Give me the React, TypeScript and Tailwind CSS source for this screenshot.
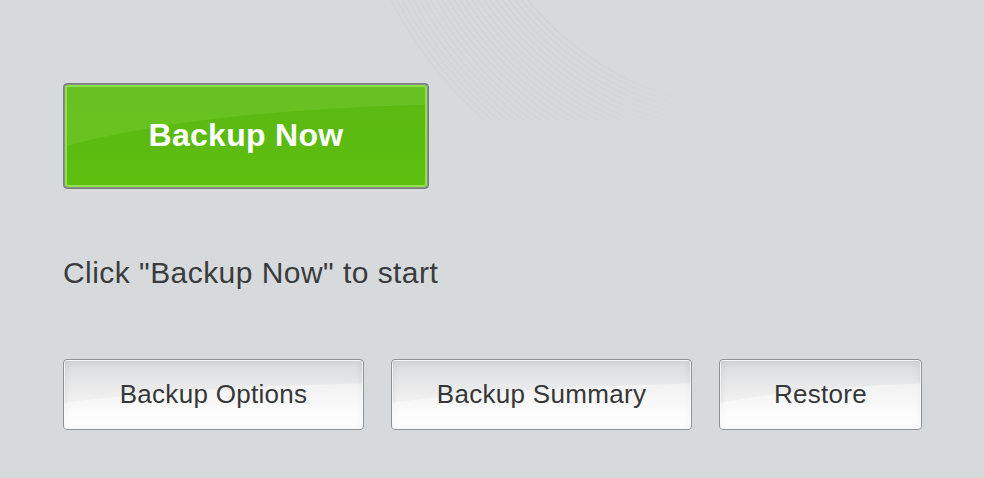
import React from "react";

const font = { fontFamily: '"Liberation Sans", Arial, sans-serif' };

function GrayButton({ label, w }: { label: string; w: string }) {
  return (
    <div
      className={`relative ${w} h-[71px] rounded-[4px] border border-[#8e9196] overflow-hidden flex items-center justify-center shadow-[inset_0_0_0_1px_#f4f4f4,inset_0_0_8px_rgba(0,0,0,0.10)]`}
      style={{ background: "linear-gradient(180deg,#d8d9db 0%,#e2e3e4 22%,#eeeeef 50%,#f8f8f8 75%,#ffffff 100%)" }}
    >
      <svg className="absolute inset-0 w-full h-full" preserveAspectRatio="none" viewBox="0 0 100 100">
        <path d="M0 62 C 30 45, 60 38, 100 34 L100 100 L0 100 Z" fill="#ffffff" opacity="0.45" />
      </svg>
      <span className="relative text-[26px] tracking-[0.3px] text-[#363738] leading-none -mt-[2px]">{label}</span>
    </div>
  );
}

export default function App() {
  return (
    <div className="relative w-[984px] h-[478px] overflow-hidden bg-[#d7dadd]" style={font}>
      <svg className="absolute left-0 top-0 w-[984px] h-[120px]" viewBox="0 0 984 120">
        <defs>
          <radialGradient id="fade" cx="520" cy="0" r="200" gradientUnits="userSpaceOnUse">
            <stop offset="0" stopColor="#fff" stopOpacity="1" />
            <stop offset="0.6" stopColor="#fff" stopOpacity="0.6" />
            <stop offset="1" stopColor="#fff" stopOpacity="0" />
          </radialGradient>
          <mask id="m">
            <rect x="0" y="0" width="984" height="120" fill="url(#fade)" />
          </mask>
        </defs>
        <g mask="url(#m)">
          {Array.from({ length: 24 }).map((_, i) => (
            <circle
              key={i}
              cx={760}
              cy={-190}
              r={300 + i * 5}
              stroke="#c6c9cd"
              strokeWidth="1"
              fill="none"
              opacity={0.6}
            />
          ))}
        </g>
      </svg>
      <div className="relative flex flex-col pl-[63px] pt-[83px]">
        <div className="relative w-[366px] h-[106px] rounded-[4px] border border-[#7b7f7b] p-px bg-[#8a8e8a]">
          <div
            className="relative w-full h-full rounded-[3px] border-2 border-[#8ee04c] overflow-hidden flex items-center justify-center"
            style={{ background: "linear-gradient(180deg,#5bb813 0%,#5cbb10 60%,#5fbf0e 100%)" }}
          >
            <svg className="absolute inset-0 w-full h-full" preserveAspectRatio="none" viewBox="0 0 100 100">
              <path d="M0 0 L100 0 L100 18 C 60 22, 25 35, 0 60 Z" fill="#7fd23c" opacity="0.35" />
            </svg>
            <span className="relative text-[32px] tracking-[0.3px] font-bold text-white leading-none -mt-[2px]">Backup Now</span>
          </div>
        </div>
        <div className="mt-[67px] text-[30px] tracking-[0.45px] leading-[34px] text-[#3a3b3c]">Click "Backup Now" to start</div>
        <div className="mt-[69px] flex gap-[27px]">
          <GrayButton label="Backup Options" w="w-[301px]" />
          <GrayButton label="Backup Summary" w="w-[301px]" />
          <GrayButton label="Restore" w="w-[203px]" />
        </div>
      </div>
    </div>
  );
}
